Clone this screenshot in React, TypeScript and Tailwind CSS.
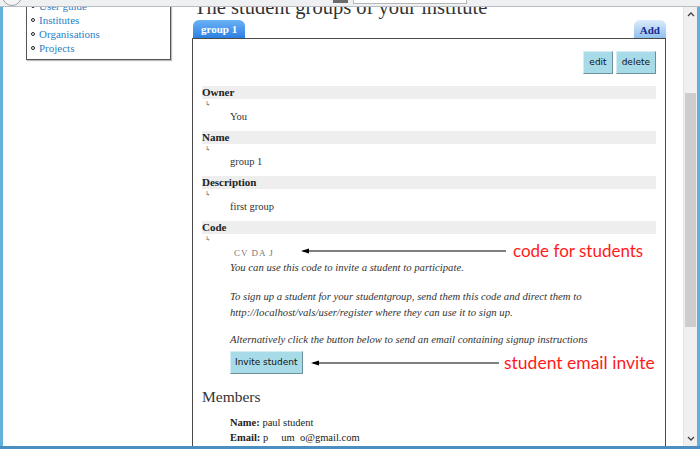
import React from "react";

const serif = { fontFamily: '"Liberation Serif", "DejaVu Serif", serif' };
const sans = { fontFamily: '"DejaVu Sans", "Liberation Sans", sans-serif' };
const red = { fontFamily: 'Lato, "Liberation Sans", sans-serif' };

function Field({ label, value }: { label: string; value: React.ReactNode }) {
  return (
    <div className="mb-[7px]">
      <div className="h-[13px] bg-[#eeeeee] text-[11px] leading-[13px] font-bold text-[#222]">{label}</div>
      <div className="h-[11px] pl-[3px] text-[7px] leading-[11px] text-[#555]">↳</div>
      <div className="h-[14px] pl-[28px] text-[10.5px] leading-[14px] text-[#333]">{value}</div>
    </div>
  );
}

function Arrow({ width }: { width: number }) {
  return (
    <svg width={width} height="8" viewBox={`0 0 ${width} 8`}>
      <line x1="2" y1="4" x2={width} y2="4" stroke="#000" strokeWidth="1" />
      <path d="M0 4 L8 1.5 L8 6.5 Z" fill="#000" />
    </svg>
  );
}

export default function App() {
  return (
    <div className="w-[700px] h-[449px] overflow-hidden flex flex-col bg-white" style={serif}>
      {/* browser chrome bottom edge */}
      <div className="h-[7px] bg-[#eef0f2] border-b border-[#b9bdc2] relative overflow-hidden">
        <div className="absolute left-[2px] top-[-14px] w-[20px] h-[20px] rounded-full border border-[#9aa0a6] bg-[#f4f4f4]" />
        <div className="absolute left-[333px] top-0 w-[15px] h-[3px] bg-[#6b6b6b]" />
        <div className="absolute left-[353px] top-[-3px] w-[114px] h-[7px] border border-[#b8b8b8] bg-white" />
      </div>
      <div className="flex flex-1 min-h-0">
        <div className="w-[3px] bg-[#62b0dc]" />
        <div className="flex-1 overflow-hidden relative">
          <div className="flex">
            {/* sidebar */}
            <div className="ml-[23px] w-[145px] mt-[-10px] self-start border border-[#555] shadow-[1px_1px_1px_rgba(0,0,0,0.25)] pl-[4px] pt-[1px] pb-[4px]">
              {["User guide", "Institutes", "Organisations", "Projects"].map((t) => (
                <div key={t} className="flex items-center h-[14px]">
                  <span className="w-[4px] h-[4px] rounded-full border border-[#222] mr-[4px]" />
                  <span className="text-[11px] leading-[14px] text-[#2a7fc4]">{t}</span>
                </div>
              ))}
            </div>
            {/* main */}
            <div className="ml-[21px] w-[474px] mt-[-11px]">
              <div className="h-[22px] text-[20.5px] leading-[22px] text-[#333] pl-[2px] mb-[2px] whitespace-nowrap">The student groups of your institute</div>
              <div className="flex justify-between items-end h-[18px]">
                <div className="ml-[1px] h-[18px] px-[8px] rounded-t-[6px] bg-gradient-to-b from-[#6bb2f5] to-[#2c7fe2] text-white font-bold text-[11px] leading-[18px]">
                  group 1
                </div>
                <div className="h-[18px] px-[6px] rounded-t-[6px] bg-gradient-to-b from-[#dcecfb] to-[#8fc0ee] text-[#1b2a8c] font-bold text-[11px] leading-[20px]">
                  Add
                </div>
              </div>
              <div className="border border-[#4a4a4a] px-[9px] pt-[12px] pb-[40px] relative">
                <div className="flex justify-end gap-[3px]">
                  {["edit", "delete"].map((b) => (
                    <div key={b} style={sans} className="h-[23px] px-[5px] bg-[#a8dbe8] border border-t-[#d5eef5] border-l-[#d5eef5] border-r-[#6c8f99] border-b-[#6c8f99] text-[9px] leading-[21px] text-[#111]">
                      {b}
                    </div>
                  ))}
                </div>
                <div className="mt-[12px]">
                  <Field label="Owner" value="You" />
                  <Field label="Name" value="group 1" />
                  <Field label="Description" value="first group" />
                  <div>
                    <div className="h-[13px] bg-[#eeeeee] text-[11px] leading-[13px] font-bold text-[#222]">Code</div>
                    <div className="h-[11px] pl-[3px] text-[7px] leading-[11px] text-[#555]">↳</div>
                    <div className="h-[14px] pl-[32px] text-[9px] leading-[16px] text-[#777] tracking-[1px]">CV  DA  J</div>
                    <div className="pl-[28px] italic text-[10.7px] leading-[16px] text-[#333]">
                      <p>You can use this code to invite a student to participate.</p>
                      <p className="mt-[13px]">
                        To sign up a student for your studentgroup, send them this code and direct them to
                        <br />
                        http://localhost/vals/user/register where they can use it to sign up.
                      </p>
                      <p className="mt-[11px]">Alternatively click the button below to send an email containing signup instructions</p>
                    </div>
                    <div className="pl-[28px] mt-[1px]">
                      <div style={sans} className="inline-block h-[23px] px-[4px] bg-[#a8dbe8] border border-t-[#d5eef5] border-l-[#d5eef5] border-r-[#6c8f99] border-b-[#6c8f99] text-[9px] leading-[21px] text-[#111]">
                        Invite student
                      </div>
                    </div>
                  </div>
                  <div className="mt-[12px] text-[15.5px] leading-[22px] text-[#333]">Members</div>
                  <div className="pl-[28px] mt-[7px] text-[10.5px] leading-[15px] text-[#222]">
                    <div>
                      <b>Name:</b> paul student
                    </div>
                    <div>
                      <b>Email:</b> p{"\u00a0\u00a0\u00a0\u00a0\u00a0"}um{"\u00a0\u00a0"}o@gmail.com
                    </div>
                  </div>
                </div>
                {/* annotations */}
                <div className="absolute left-[108px] top-[201px] h-[22px] flex items-center whitespace-nowrap">
                  <Arrow width={205} />
                  <span style={red} className="ml-[7px] text-[17px] leading-[22px] text-[#ff1a1a]">code for students</span>
                </div>
                <div className="absolute left-[118px] top-[313px] h-[22px] flex items-center whitespace-nowrap">
                  <Arrow width={188} />
                  <span style={red} className="ml-[5px] text-[17.5px] leading-[22px] text-[#ff1a1a]">student email invite</span>
                </div>
              </div>
            </div>
          </div>
        </div>
        {/* scrollbar */}
        <div className="w-[14px] bg-[#f0f0f0] flex flex-col items-center border-l border-[#e4e4e4]">
          <svg width="8" height="6" viewBox="0 0 8 6" className="mt-[4px]">
            <path d="M1 5 L4 2 L7 5" stroke="#444" strokeWidth="1.3" fill="none" />
          </svg>
          <div className="mt-[76px] w-[11px] h-[234px] bg-[#cdcdcd]" />
          <div className="flex-1" />
          <svg width="8" height="6" viewBox="0 0 8 6" className="mb-[4px]">
            <path d="M1 1 L4 4 L7 1" stroke="#444" strokeWidth="1.3" fill="none" />
          </svg>
        </div>
        <div className="w-[3px] bg-[#62b0dc]" />
      </div>
      <div className="h-[3px] bg-[#4a8fbf]" />
    </div>
  );
}
